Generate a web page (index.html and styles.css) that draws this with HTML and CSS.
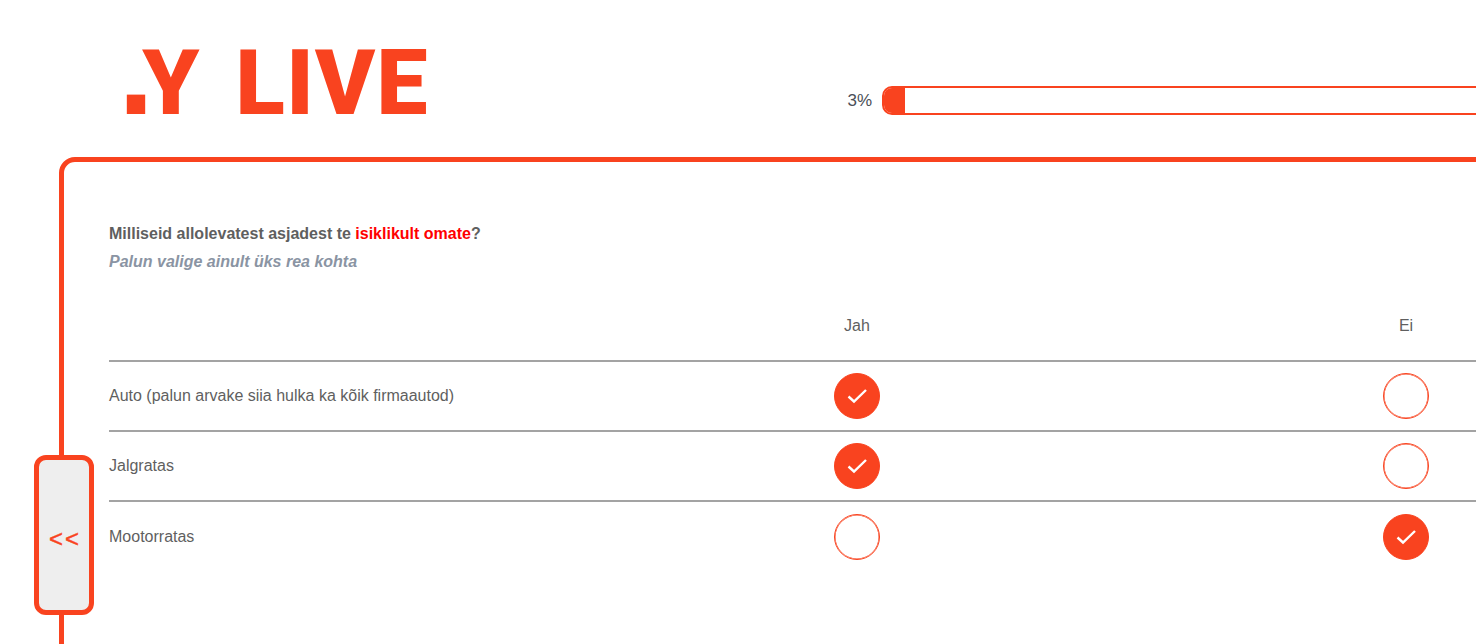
FILE: index.html
```html
<!DOCTYPE html>
<html lang="et">
<head>
<meta charset="utf-8">
<title>.Y LIVE</title>
<link rel="stylesheet" href="styles.css">
</head>
<body>
<div class="page">
  <header class="header">
    <div class="logo"><span class="logo-dot">.</span>Y LIVE</div>
    <div class="progress">
      <span class="progress-label">3%</span>
      <div class="progress-track"><div class="progress-fill"></div></div>
    </div>
  </header>
  <main class="panel">
    <button class="back" type="button">&lt;&lt;</button>
    <p class="question">Milliseid allolevatest asjadest te <span class="accent">isiklikult omate</span>?</p>
    <p class="hint">Palun valige ainult üks rea kohta</p>
    <div class="grid">
      <div class="row head">
        <div class="label"></div>
        <div class="cell">Jah</div>
        <div class="cell">Ei</div>
      </div>
      <div class="row">
        <div class="label">Auto (palun arvake siia hulka ka kõik firmaautod)</div>
        <div class="cell"><span class="radio on"><svg viewBox="0 0 46 46" class="check"><path d="M14.5 23.5l5.5 5L32 17"/></svg></span></div>
        <div class="cell"><span class="radio"></span></div>
      </div>
      <div class="row">
        <div class="label">Jalgratas</div>
        <div class="cell"><span class="radio on"><svg viewBox="0 0 46 46" class="check"><path d="M14.5 23.5l5.5 5L32 17"/></svg></span></div>
        <div class="cell"><span class="radio"></span></div>
      </div>
      <div class="row">
        <div class="label">Mootorratas</div>
        <div class="cell"><span class="radio"></span></div>
        <div class="cell"><span class="radio on"><svg viewBox="0 0 46 46" class="check"><path d="M14.5 23.5l5.5 5L32 17"/></svg></span></div>
      </div>
    </div>
  </main>
</div>
</body>
</html>
```
FILE: styles.css
```css
html, body {
  margin: 0;
  height: 644px;
  overflow: hidden;
  background: #fff;
}
.page {
  width: 1800px;
  font-family: "Liberation Sans", Arial, sans-serif;
  color: #5f5f5f;
}
.header {
  display: flex;
  height: 157px;
  box-sizing: border-box;
}
.logo {
  width: 720px;
  box-sizing: border-box;
  padding: 30px 0 0 118px;
  font-family: Roboto, sans-serif;
  font-weight: 900;
  font-size: 91px;
  line-height: 107px;
  letter-spacing: 1.3px;
  word-spacing: 11px;
  color: #f9431f;
  white-space: nowrap;
}
.logo-dot {
  font-family: "Liberation Sans", Arial, sans-serif;
  font-weight: 700;
  font-size: 130px;
  line-height: 0;
  letter-spacing: -12px;
}
.progress {
  display: flex;
  align-items: flex-start;
  padding-top: 86px;
  flex: 1;
}
.progress-label {
  width: 162px;
  box-sizing: border-box;
  text-align: right;
  padding-right: 10px;
  font-size: 17px;
  line-height: 29px;
  color: #4a4f57;
}
.progress-track {
  width: 900px;
  height: 29px;
  box-sizing: border-box;
  border: 2px solid #f9431f;
  border-radius: 10px;
  overflow: hidden;
}
.progress-fill {
  width: 21px;
  height: 100%;
  background: #f9431f;
}
.panel {
  position: relative;
  margin-left: 59px;
  width: 1700px;
  height: 600px;
  box-sizing: border-box;
  border: 5px solid #f9431f;
  border-radius: 16px;
  padding: 62px 0 0 45px;
}
.back {
  position: absolute;
  left: -30px;
  top: 293px;
  width: 60px;
  height: 160px;
  box-sizing: border-box;
  border: 5px solid #f9431f;
  border-radius: 12px;
  background: #eee;
  color: #f9431f;
  font-family: "Liberation Sans", Arial, sans-serif;
  font-size: 24px;
  font-weight: 400;
  letter-spacing: 2px;
  -webkit-text-stroke: 0.4px #f9431f;
  padding: 8px 0 0 2px;
}
.question {
  margin: 0;
  font-size: 16px;
  font-weight: 700;
  line-height: 20px;
}
.accent {
  color: #f00;
}
.hint {
  margin: 8px 0 0;
  font-size: 16px;
  font-weight: 700;
  font-style: italic;
  line-height: 20px;
  color: #8a94a3;
}
.grid {
  margin-top: 28px;
}
.row {
  display: grid;
  grid-template-columns: 473.5px 549px 549px;
  align-items: center;
  height: 70px;
  border-top: 2px solid #a3a3a3;
  box-sizing: border-box;
  font-size: 16px;
}
.row.head {
  height: 60px;
  border-top: 0;
  padding-bottom: 8px;
}
.row:last-child {
  height: 71px;
}
.cell {
  display: flex;
  justify-content: center;
  align-items: center;
}
.radio {
  width: 46px;
  height: 46px;
  box-sizing: border-box;
  border: 1px solid #f9431f;
  box-shadow: inset 0 0 0 0.5px #f9431f;
  border-radius: 50%;
  background: #fff;
}
.radio.on {
  background: #f9431f;
}
.check {
  display: block;
  width: 46px;
  height: 46px;
  margin: -1px;
  fill: none;
  stroke: #fff;
  stroke-width: 2.4;
}
```
